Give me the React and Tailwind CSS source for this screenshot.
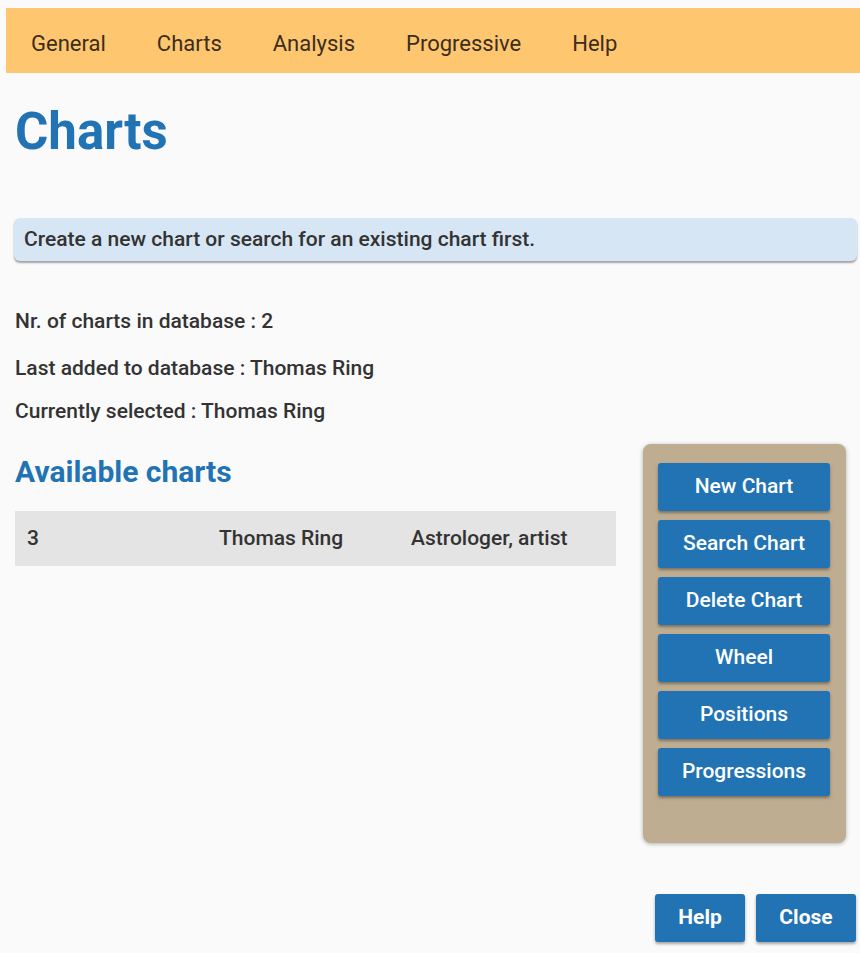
export default function App() {
  const navItems = ['General', 'Charts', 'Analysis', 'Progressive', 'Help'];
  const actions = ['New Chart', 'Search Chart', 'Delete Chart', 'Wheel', 'Positions', 'Progressions'];

  return (
    <div className="min-h-[953px] bg-[#fafafa] pt-[8px] pl-[6px] text-[#333333]" style={{ fontFamily: 'Roboto, "Noto Sans", sans-serif' }}>
      <nav className="flex h-[65px] items-center bg-[#ffc670] px-[25px] pt-[5px]">
        {navItems.map((item) => (
          <span key={item} className="mr-[51px] text-[22px] text-[#3b2e1e]">
            {item}
          </span>
        ))}
      </nav>

      <div className="pl-[8px] pr-[3px]">
        <h1 className="mt-[27px] pl-[1px] text-[51px] leading-[64px] font-bold text-[#2173b3]">Charts</h1>

        <div className="mt-[54px] flex h-[43px] items-center rounded-[6px] bg-[#d6e6f4] px-[10px] text-[21px] font-medium text-[#333] shadow-[0_2px_2px_rgba(0,0,0,0.35)]">
          Create a new chart or search for an existing chart first.
        </div>

        <div className="mt-[47px] flex flex-col gap-[21px] pl-[1px] text-[21px] font-medium">
          <p className="leading-[26px]">Nr. of charts in database : 2</p>
          <p className="leading-[26px]">Last added to database : Thomas Ring</p>
          <p className="-mt-[4px] leading-[26px]">Currently selected : Thomas Ring</p>
        </div>

        <div className="mt-[20px] flex">
          <div className="w-[602px] pl-[1px]">
            <h2 className="mt-[12px] text-[30px] leading-[32px] font-bold text-[#2173b3]">Available charts</h2>
            <div className="mt-[23px] flex h-[55px] items-center bg-[#e4e4e4] text-[21px] font-medium">
              <span className="w-[204px] pl-[12px]">3</span>
              <span className="w-[192px]">Thomas Ring</span>
              <span>Astrologer, artist</span>
            </div>
          </div>

          <div className="ml-[27px] flex h-[399px] w-[203px] flex-col gap-[9px] rounded-[8px] bg-[#bfad92] px-[15px] pt-[19px] shadow-[0_1px_4px_rgba(0,0,0,0.3)]">
            {actions.map((a) => (
              <button
                key={a}
                type="button"
                className="h-[48px] w-[172px] rounded-[3px] bg-[#2173b3] text-[21px] font-medium text-white shadow-[0_2px_3px_rgba(0,0,0,0.35)]"
              >
                {a}
              </button>
            ))}
          </div>
        </div>

        <div className="mt-[51px] flex justify-end gap-[11px] pr-[1px]">
          <button type="button" className="h-[48px] w-[90px] rounded-[3px] bg-[#2173b3] text-[21px] font-bold text-white shadow-[0_2px_3px_rgba(0,0,0,0.35)]">
            Help
          </button>
          <button type="button" className="h-[48px] w-[100px] rounded-[3px] bg-[#2173b3] text-[21px] font-bold text-white shadow-[0_2px_3px_rgba(0,0,0,0.35)]">
            Close
          </button>
        </div>
      </div>
    </div>
  );
}
